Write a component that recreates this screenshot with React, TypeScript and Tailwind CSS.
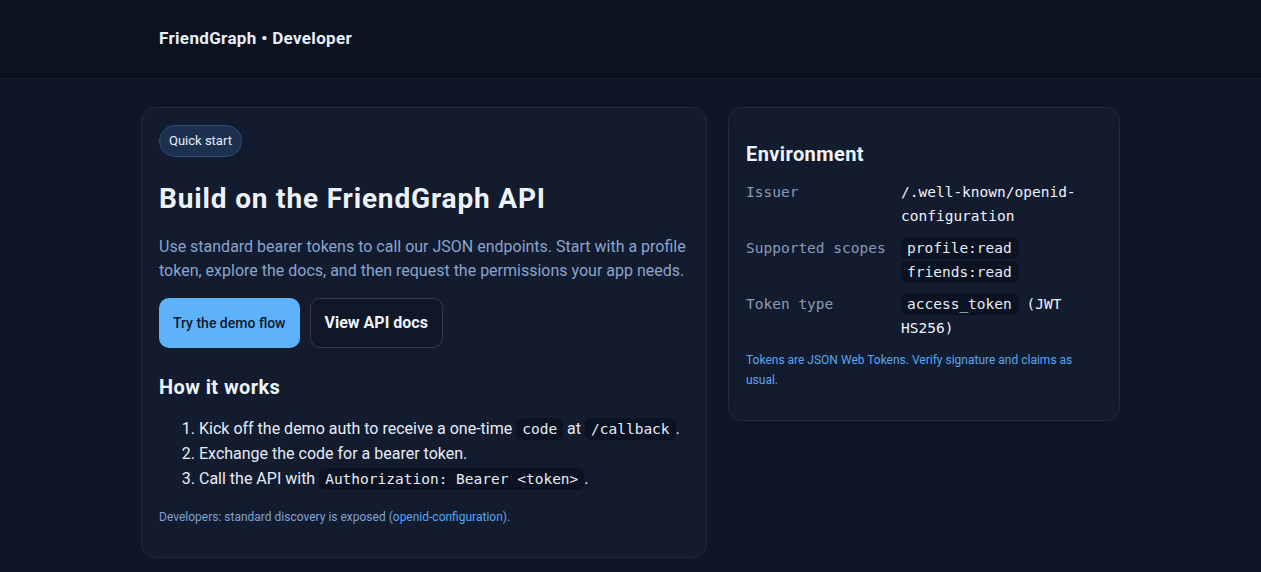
import React from "react";

const sans = "font-['Roboto',sans-serif]";
const mono = "font-['DejaVu_Sans_Mono',monospace]";

function Code({ children }: { children: React.ReactNode }) {
  return (
    <code className={`${mono} text-[14.5px] leading-[16px] bg-[#0b1222] text-[#e5ecf7] rounded-md px-[6px] py-[3px]`}>
      {children}
    </code>
  );
}

export default function App() {
  return (
    <div className={`${sans} min-h-[572px] bg-[#0e1628] text-[#e6edf7]`}>
      <header className="h-[79px] bg-[#0b1220] border-b border-[#172033]">
        <div className="max-w-[979px] mx-auto px-[18px] h-full flex items-center">
          <span className="text-[17px] tracking-[0.02em] font-bold text-[#e8eefa]">FriendGraph • Developer</span>
        </div>
      </header>
      <main className="max-w-[979px] mx-auto pt-[28px] grid grid-cols-[566px_392px] gap-[21px] items-start">
        <section className="bg-[#131b2f] border border-[#1f2940] rounded-[14px] p-[17px] pb-[31px]">
          <span className="inline-block text-[13px] leading-[18px] px-[9px] py-[6px] rounded-full bg-[#1c3150] border border-[#2d4a70] text-[#e6efff]">
            Quick start
          </span>
          <h1 className="mt-[24px] text-[28px] leading-[36px] tracking-[0.03em] font-bold text-[#eef3fb]">
            Build on the FriendGraph API
          </h1>
          <p className="mt-[18px] text-[16px] leading-[24px] text-[#8aa4cc]">
            Use standard bearer tokens to call our JSON endpoints. Start with a profile token, explore the docs, and
            then request the permissions your app needs.
          </p>
          <div className="mt-[15px] flex gap-[10px]">
            <button className="h-[50px] px-[14px] rounded-[10px] bg-[#5eb2fb] text-[#0f1a2c] text-[14px] font-medium">
              Try the demo flow
            </button>
            <button className="h-[50px] px-[14px] rounded-[10px] border border-[#323c50] bg-[#0f1728] text-[#eef3fb] text-[16px] font-bold">
              View API docs
            </button>
          </div>
          <h2 className="mt-[25px] text-[20px] leading-[28px] tracking-[0.02em] font-bold text-[#eef3fb]">How it works</h2>
          <ol className="mt-[15px] pl-[40px] list-decimal text-[16px] leading-[25px] text-[#e6edf7]">
            <li>
              Kick off the demo auth to receive a one-time <Code>code</Code> at <Code>/callback</Code>.
            </li>
            <li>Exchange the code for a bearer token.</li>
            <li>
              Call the API with <Code>Authorization: Bearer &lt;token&gt;</Code>.
            </li>
          </ol>
          <p className="mt-[17px] text-[12px] leading-[18px] text-[#7ea2d4]">
            Developers: standard discovery is exposed (
            <a className="text-[#4ea6f6]">openid-configuration</a>).
          </p>
        </section>
        <aside className="bg-[#131b2f] border border-[#1f2940] rounded-[14px] p-[17px] pt-[32px] pb-[30px]">
          <h2 className="text-[20px] leading-[28px] tracking-[0.02em] font-bold text-[#eef3fb]">Environment</h2>
          <div className={`mt-[12px] grid grid-cols-[155px_1fr] gap-y-[8px] ${mono} text-[14.5px] leading-[24px]`}>
            <div className="text-[#8a9ab6]">Issuer</div>
            <div className="text-[#eef3fb]">/.well-known/openid-configuration</div>
            <div className="text-[#8a9ab6]">Supported scopes</div>
            <div>
              <Code>profile:read</Code>
              <br />
              <Code>friends:read</Code>
            </div>
            <div className="text-[#8a9ab6]">Token type</div>
            <div className="text-[#eef3fb]">
              <Code>access_token</Code> (JWT HS256)
            </div>
          </div>
          <p className="mt-[10px] text-[12px] leading-[20px] text-[#5aa6ee]">
            Tokens are JSON Web Tokens. Verify signature and claims as usual.
          </p>
        </aside>
      </main>
    </div>
  );
}
